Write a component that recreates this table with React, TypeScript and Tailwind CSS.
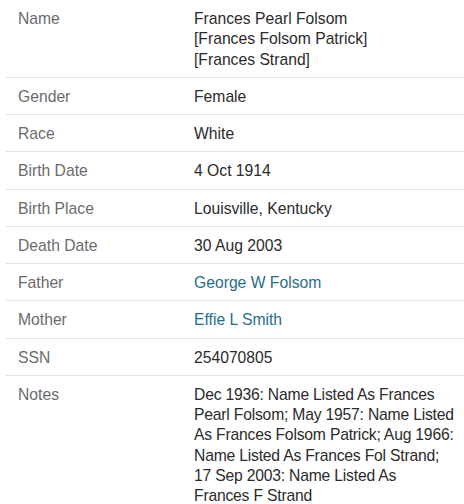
const rows: { label: string; value: React.ReactNode; link?: boolean }[] = [
  {
    label: "Name",
    value: (
      <>
        <div>Frances Pearl Folsom</div>
        <div>[Frances Folsom Patrick]</div>
        <div>[Frances Strand]</div>
      </>
    ),
  },
  { label: "Gender", value: "Female" },
  { label: "Race", value: "White" },
  { label: "Birth Date", value: "4 Oct 1914" },
  { label: "Birth Place", value: "Louisville, Kentucky" },
  { label: "Death Date", value: "30 Aug 2003" },
  { label: "Father", value: "George W Folsom", link: true },
  { label: "Mother", value: "Effie L Smith", link: true },
  { label: "SSN", value: "254070805" },
  {
    label: "Notes",
    value: (
      <div className="whitespace-nowrap tracking-[-0.2px]">
        Dec 1936: Name Listed As Frances
        <br />
        Pearl Folsom; May 1957: Name Listed
        <br />
        As Frances Folsom Patrick; Aug 1966:
        <br />
        Name Listed As Frances Fol Strand;
        <br />
        17 Sep 2003: Name Listed As
        <br />
        Frances F Strand
      </div>
    ),
  },
];

export default function App() {
  return (
    <div className="min-h-[504px] overflow-hidden bg-white pl-[6px] font-['Liberation_Sans',Arial,sans-serif] text-[15.7px] leading-[20.25px]">
      {rows.map((r, i) => (
        <div
          key={r.label}
          className={
            "grid grid-cols-[188px_1fr] pb-[7px] pt-[9px] " +
            (i > 0 ? "border-t border-[#e3e3e3]" : "")
          }
        >
          <div className="px-3 text-[#6b6b6b]">{r.label}</div>
          <div className="pr-[8px] text-[#2b2b2b]">
            {r.link ? (
              <a href="#" className="text-[#1f6f8b]">
                {r.value}
              </a>
            ) : (
              r.value
            )}
          </div>
        </div>
      ))}
    </div>
  );
}
